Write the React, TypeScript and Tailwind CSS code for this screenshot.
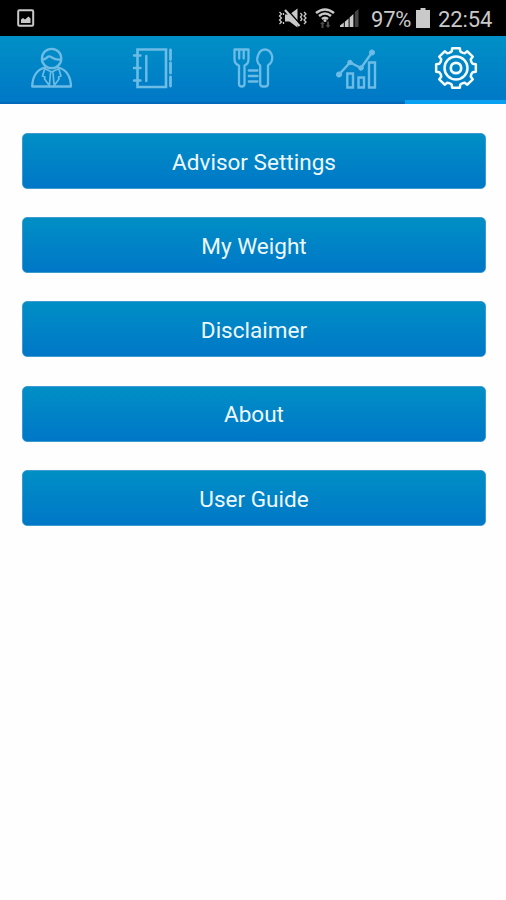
import type { ReactNode } from "react";

const entries = ["Advisor Settings", "My Weight", "Disclaimer", "About", "User Guide"];

function gearPath(cx: number, cy: number) {
  const points: string[] = [];
  for (let i = 0; i < 8; i++) {
    const base = (i * Math.PI) / 4 - Math.PI / 2;
    const corners: [number, number][] = [
      [-0.36, 16.6],
      [-0.25, 17.2],
      [-0.19, 20.2],
      [0.19, 20.2],
      [0.25, 17.2],
      [0.36, 16.6],
    ];
    for (const [a, r] of corners) {
      points.push(`${(cx + r * Math.cos(base + a)).toFixed(2)} ${(cy + r * Math.sin(base + a)).toFixed(2)}`);
    }
  }
  return `M${points.join("L")}Z`;
}

function Tab({ active, children }: { active?: boolean; children: ReactNode }) {
  return (
    <button
      className={
        active
          ? "flex flex-1 items-center justify-center border-b-4 border-[#08a0f0] pt-1 text-[#f4fbff]"
          : "flex flex-1 items-center justify-center border-b-2 border-[#0069b8] pt-0.5 text-[#6cbce5]"
      }
    >
      <svg
        className="size-11 overflow-visible"
        viewBox="0 0 44 44"
        fill="none"
        stroke="currentColor"
        strokeWidth="2.3"
        strokeLinecap="round"
        strokeLinejoin="round"
      >
        {children}
      </svg>
    </button>
  );
}

function StatusBar() {
  return (
    <div className="flex h-9 items-center bg-black pr-[12px] pl-[17px] text-[#c9c9c9]">
      <svg className="size-[18px]" viewBox="0 0 18 18">
        <rect x="1.2" y="1.2" width="15" height="15.6" rx="1.2" fill="none" stroke="currentColor" strokeWidth="2" />
        <path d="M4 14V10.5L6 9L8 10.5L11.5 7.5L13.5 9.5V14Z" fill="currentColor" />
      </svg>
      <svg className="ml-auto h-[22px] w-[29px]" viewBox="0 0 29 22" fill="none" stroke="currentColor">
        <path d="M7 7.5H11.500L19.500 1.500V20.500L11.500 14.500H7Z" fill="currentColor" stroke="none" />
        <path d="M9 2.500L22 17" stroke="#000" strokeWidth="1.6" />
        <path d="M7 3L21.500 19" strokeWidth="2.2" />
        <path d="M1.500 5L3.500 7L1.500 9L3.500 11L1.500 13L3.500 15L1.500 17M5.500 6V8M5.500 15V17M26 5L28 7L26 9L28 11L26 13L28 15L26 17M22.500 6L24 8L22.500 10L24 12L22.500 14" strokeWidth="1.3" />
      </svg>
      <svg className="ml-2 h-[22px] w-[20px]" viewBox="0 0 20 22" fill="none" stroke="currentColor">
        <path d="M1 6Q10 -1 19 6M4 9Q10 4 16 9M7 12Q10 9.500 13 12" strokeWidth="2.5" />
        <circle cx="10" cy="13.500" r="1.500" fill="currentColor" stroke="none" />
        <path d="M5 17L7.500 14.500L10 17H8.500V21H6.500V17ZM10.500 18H12V14.500H14V18H15.500L13 21Z" fill="#4b4b4b" stroke="none" />
      </svg>
      <svg className="ml-[5px] h-[20px] w-[20px]" viewBox="0 0 20 20">
        <path d="M0 19V17.500L3.800 14.500V19ZM4.800 19V13.800L8.600 10.500V19ZM9.600 19V9.500L13.400 6V19Z" fill="currentColor" />
        <path d="M14.800 19V4L18.500 1V19Z" fill="#444" />
      </svg>
      <span className="ml-[11px] w-[42px] pt-1 text-[22px] leading-none tracking-[-0.2px] whitespace-nowrap">97%</span>
      <svg className="ml-[3px] h-[20px] w-[14px]" viewBox="0 0 14 20">
        <path d="M4.500 0H9.500V2H14V20H0V2H4.500Z" fill="currentColor" />
      </svg>
      <span className="ml-2 w-[56px] pt-1 text-[22px] leading-none tracking-[-0.1px] whitespace-nowrap">22:54</span>
    </div>
  );
}

export default function App() {
  return (
    <div className="flex h-[900px] w-[506px] flex-col overflow-hidden bg-[#fefefe] font-['Roboto',sans-serif]">
      <StatusBar />
      <nav className="flex h-[68px] bg-linear-to-b from-[#0090c6] to-[#0077c6]">
        <Tab>
          <circle cx="22.600" cy="10.500" r="9.700" />
          <path d="M13.500 11.500C18 11.500 18 7.500 21 8.500C24 9.500 25 12.500 31.500 11.500" />
          <path d="M16 19.500C7 22 3.500 29 3.200 38.500H42C41.700 29 38 22 29.500 19.500" />
          <path d="M16 20L13.500 28L16 29L15.500 31L21 38.500M29.500 20L32 28L29.500 29L30 31L24.500 38.500M16.500 21L22.700 24L29 21M21.500 24.500L20.500 36M24 24.500L25 36" strokeWidth="1.700" />
        </Tab>
        <Tab>
          <path d="M7.500 1.500H36V39H7.500Z" strokeWidth="2.600" strokeLinejoin="miter" />
          <path d="M4 7.500H10.500M4 20H10.500M4 32.500H10.500M16.300 8V33" strokeWidth="2.400" />
          <path d="M40.500 2V11.500M40.500 15V25M40.500 29V38" strokeWidth="2.800" />
        </Tab>
        <Tab>
          <path d="M3.500 1.500H17.500V11Q17.500 16 13.500 17.500V36Q13.500 38.500 10.700 38.500Q8 38.500 8 36V17.500Q3.500 16 3.500 11Z" />
          <path d="M8.200 2V10.500M12.700 2V10.500" />
          <path d="M32 38.500Q29.200 38.500 29.200 36V17.500Q24.500 14 27 7.500Q29 1.500 34 1.500Q39 1.500 41 7.500Q42.500 13.500 37 17.500V36Q37 38.500 34 38.500Z" />
          <path d="M17.800 22.500H26.500M17.800 28H26.500M17.800 33.500H26.500" />
        </Tab>
        <Tab>
          <g strokeLinejoin="miter" strokeWidth="2.400">
            <path d="M15.300 25.500H21V39.500H15.300ZM26.500 29.500H32V39.500H26.500ZM37 14.500H43V39.500H37Z" />
            <path d="M7 26.500L18 14.500L29 20L40 4.500" />
          </g>
          <g fill="currentColor" strokeWidth="1">
            <circle cx="7" cy="26.500" r="2.600" />
            <circle cx="18" cy="14.500" r="2.300" />
            <circle cx="29" cy="20" r="2.300" />
            <circle cx="40" cy="4.500" r="2.600" />
          </g>
        </Tab>
        <Tab active>
          <path d={gearPath(23, 20)} strokeWidth="2.500" />
          <circle cx="23" cy="20" r="11.500" strokeWidth="2.500" />
          <circle cx="23" cy="20" r="5.200" strokeWidth="2.700" />
        </Tab>
      </nav>
      <main className="flex flex-col gap-[28.2px] pt-[29px] pr-5 pl-[22px]">
        {entries.map((label) => (
          <button
            key={label}
            className="h-14 rounded-[5px] border border-[#3d9bcf] bg-linear-to-b from-[#018fc5] to-[#0077c7] pt-0.5 text-[22.5px] leading-none tracking-[0.02px] text-[#edf8ff]"
          >
            {label}
          </button>
        ))}
      </main>
    </div>
  );
}
